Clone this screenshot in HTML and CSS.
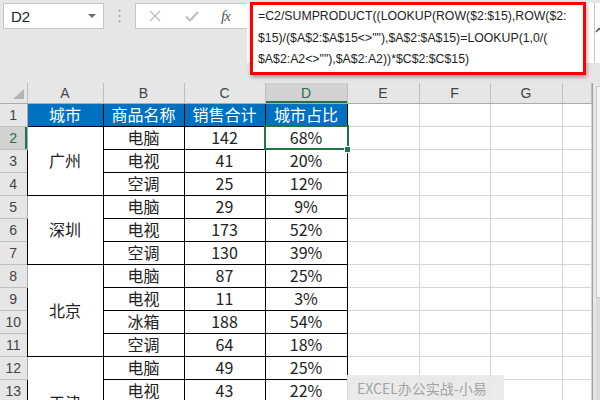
FILE: index.html
```html
<!DOCTYPE html>
<html lang="zh-CN">
<head>
<meta charset="UTF-8" />
<title>城市占比</title>
<link rel="stylesheet" href="styles.css">
</head>
<body>
  <div class="topbar">
    <div class="namebox">D2<span class="caret"></span></div>
    <div class="grip">⋮</div>
    <div class="fxbox">
      <svg class="ico" width="14" height="14" viewBox="0 0 14 14"><path d="M2 2L12 12M12 2L2 12" stroke="#bdbdbd" stroke-width="1.3" fill="none"/></svg>
      <svg class="ico" width="16" height="14" viewBox="0 0 16 14"><path d="M2 7.5L6 11.5L14 3" stroke="#bdbdbd" stroke-width="2" fill="none"/></svg>
      <span class="fx">fx</span>
    </div>
    <div class="formula">
      <div class="highlight">=C2/SUMPRODUCT((LOOKUP(ROW($2:$15),ROW($2:<br>$15)/($A$2:$A$15&lt;&gt;""),$A$2:$A$15)=LOOKUP(1,0/(<br>$A$2:A2&lt;&gt;""),$A$2:A2))*$C$2:$C$15)</div>
    </div>
    <div class="collapse">
      <svg width="7" height="6" viewBox="0 0 7 6"><path d="M1 5L4 1.5L7 5" stroke="#444" stroke-width="1.2" fill="none"/></svg>
    </div>
  </div>

  <div class="sheetwrap">
    <table class="sheet">
      <colgroup>
        <col class="w-rh"><col class="w-a"><col class="w-b"><col class="w-c"><col class="w-d"><col class="w-e"><col class="w-f"><col class="w-g"><col class="w-h">
      </colgroup>
      <tr class="colhead">
        <th class="corner"><span class="tri"></span></th><th>A</th><th>B</th><th>C</th><th class="sel">D</th><th>E</th><th>F</th><th>G</th><th></th>
      </tr>
      <tr>
        <th class="rh">1</th><td class="d hd">城市</td><td class="d hd">商品名称</td><td class="d hd">销售合计</td><td class="d hd">城市占比</td><td></td><td></td><td></td><td></td>
      </tr>
      <tr>
        <th class="rh sel">2</th><td class="d" rowspan="3">广州</td><td class="d">电脑</td><td class="d">142</td><td class="d active">68%</td><td></td><td></td><td></td><td></td>
      </tr>
      <tr>
        <th class="rh">3</th><td class="d">电视</td><td class="d">41</td><td class="d">20%</td><td></td><td></td><td></td><td></td>
      </tr>
      <tr>
        <th class="rh">4</th><td class="d">空调</td><td class="d">25</td><td class="d">12%</td><td></td><td></td><td></td><td></td>
      </tr>
      <tr>
        <th class="rh">5</th><td class="d" rowspan="3">深圳</td><td class="d">电脑</td><td class="d">29</td><td class="d">9%</td><td></td><td></td><td></td><td></td>
      </tr>
      <tr>
        <th class="rh">6</th><td class="d">电视</td><td class="d">173</td><td class="d">52%</td><td></td><td></td><td></td><td></td>
      </tr>
      <tr>
        <th class="rh">7</th><td class="d">空调</td><td class="d">130</td><td class="d">39%</td><td></td><td></td><td></td><td></td>
      </tr>
      <tr>
        <th class="rh">8</th><td class="d" rowspan="4">北京</td><td class="d">电脑</td><td class="d">87</td><td class="d">25%</td><td></td><td></td><td></td><td></td>
      </tr>
      <tr>
        <th class="rh">9</th><td class="d">电视</td><td class="d">11</td><td class="d">3%</td><td></td><td></td><td></td><td></td>
      </tr>
      <tr>
        <th class="rh">10</th><td class="d">冰箱</td><td class="d">188</td><td class="d">54%</td><td></td><td></td><td></td><td></td>
      </tr>
      <tr>
        <th class="rh">11</th><td class="d">空调</td><td class="d">64</td><td class="d">18%</td><td></td><td></td><td></td><td></td>
      </tr>
      <tr>
        <th class="rh">12</th><td class="d" rowspan="4">天津</td><td class="d">电脑</td><td class="d">49</td><td class="d">25%</td><td></td><td></td><td></td><td></td>
      </tr>
      <tr>
        <th class="rh">13</th><td class="d">电视</td><td class="d">43</td><td class="d">22%</td><td></td><td></td><td></td><td></td>
      </tr>
      <tr>
        <th class="rh">14</th><td class="d">冰箱</td><td class="d">52</td><td class="d">27%</td><td></td><td></td><td></td><td></td>
      </tr>
      <tr>
        <th class="rh">15</th><td class="d">空调</td><td class="d">51</td><td class="d">26%</td><td></td><td></td><td></td><td></td>
      </tr>
    </table>
    <div class="vscroll"><div class="thumb"></div><div class="track"></div></div>
  </div>

  <div class="watermark">EXCEL办公实战-小易</div>
</body>
</html>
```

FILE: styles.css
```css
body {
  margin: 0;
  width: 600px;
  height: 400px;
  overflow: hidden;
  position: relative;
  background: #e6e6e6;
  font-family: "Noto Sans CJK SC", sans-serif;
  color: #222;
}

/* formula bar */
.topbar {
  display: flex;
  align-items: flex-start;
  height: 83px;
  padding-top: 3px;
  box-sizing: border-box;
}

.namebox {
  margin-left: 3px;
  width: 101px;
  height: 26px;
  box-sizing: border-box;
  border: 1px solid #c6c6c6;
  background: #fff;
  display: flex;
  align-items: center;
  padding: 0 7px;
  font: 15px "Liberation Sans", sans-serif;
  color: #222;
}

.caret {
  margin-left: auto;
  border-left: 4px solid transparent;
  border-right: 4px solid transparent;
  border-top: 4px solid #6a6a6a;
}

.grip {
  width: 31px;
  text-align: center;
  color: #a8a8a8;
  font: 16px "DejaVu Sans", sans-serif;
  line-height: 26px;
}

.fxbox {
  width: 112px;
  height: 26px;
  box-sizing: border-box;
  border: 1px solid #c6c6c6;
  border-right: none;
  background: #fff;
  display: flex;
  align-items: center;
  padding-left: 12px;
  gap: 22px;
}

.fx {
  font: italic 15px "Liberation Serif", serif;
  color: #555;
  letter-spacing: -1px;
  margin-left: -1px;
}

.formula {
  flex: 1;
  height: 60px;
  background: #fff;
  position: relative;
}

.highlight {
  position: absolute;
  left: 3px;
  top: -1px;
  width: 336px;
  height: 73px;
  box-sizing: border-box;
  border: 3px solid #f00;
  background: #fff;
  box-shadow: 1px 2px 4px rgba(0, 0, 0, 0.35);
  padding: 1px 5px 0;
  font: 12.3px "Liberation Sans", sans-serif;
  line-height: 21.5px;
  white-space: nowrap;
  color: #222;
}

.collapse {
  width: 6px;
  height: 60px;
  border-left: 1px solid #c6c6c6;
  background: #fff;
  padding-top: 11px;
  box-sizing: border-box;
  overflow: hidden;
}

/* sheet */
.sheetwrap {
  display: flex;
  align-items: flex-start;
}

.sheet {
  border-collapse: collapse;
  table-layout: fixed;
  width: 591px;
  background: #fff;
}

.w-rh { width: 27px; }
.w-a { width: 76px; }
.w-b { width: 81px; }
.w-c { width: 81px; }
.w-d { width: 82px; }
.w-e { width: 72px; }
.w-f { width: 71px; }
.w-g { width: 72px; }
.w-h { width: 29px; }

.sheet tr {
  height: 23px;
}

.sheet tr.colhead {
  height: 20px;
}

.sheet td {
  padding: 0;
  border: 1px solid #d4d4d4;
  text-align: center;
  font-size: 16px;
  line-height: 19px;
}

.sheet td.d {
  border-color: #000;
}

.sheet td.hd {
  background: #0070c0;
  color: #fff;
}

.colhead th {
  padding: 0;
  background: #e6e6e6;
  border: 1px solid #bfbfbf;
  border-top: none;
  border-bottom-color: #ababab;
  font: 14px "Liberation Sans", sans-serif;
  line-height: 16px;
  color: #444;
  font-weight: normal;
}

.colhead th.sel {
  background: #d2d2d2;
  color: #217346;
  box-shadow: inset 0 -2px #217346;
}

.colhead th.corner {
  border-left: none;
  text-align: right;
  vertical-align: bottom;
  padding: 0 3px 4px 0;
  line-height: 0;
}

.tri {
  display: inline-block;
  border-left: 11px solid transparent;
  border-bottom: 10px solid #b4b4b4;
}

.sheet th.rh {
  padding: 0;
  background: #e6e6e6;
  border: 1px solid #bfbfbf;
  border-left: none;
  border-right-color: #ababab;
  font: 14px "Liberation Sans", sans-serif;
  line-height: 16px;
  color: #444;
  font-weight: normal;
  text-align: center;
}

.sheet th.rh.sel {
  background: #d2d2d2;
  color: #217346;
  box-shadow: inset -2px 0 #217346;
}

.active {
  position: relative;
}

.active::after {
  content: "";
  position: absolute;
  left: -2px;
  top: -2px;
  right: -2px;
  bottom: -1px;
  border: 2px solid #217346;
}

.active::before {
  content: "";
  position: absolute;
  right: -4px;
  bottom: -4px;
  width: 5px;
  height: 5px;
  background: #217346;
  border: 1px solid #fff;
  z-index: 1;
}

.vscroll {
  width: 9px;
  height: 320px;
  border-left: 1px solid #9e9e9e;
  box-sizing: border-box;
  padding-left: 3px;
}

.thumb {
  height: 210px;
  margin-top: 3px;
  background: #f3f3f3;
  border: 1px solid #c6c6c6;
  border-right: none;
}

.track {
  height: 120px;
  background: #dadada;
}

.watermark {
  position: absolute;
  left: 347px;
  top: 375px;
  width: 157px;
  height: 26px;
  box-sizing: border-box;
  padding-left: 10px;
  background: rgba(232, 232, 232, 0.92);
  color: #a3a3a3;
  font-size: 14px;
  line-height: 26px;
}
```
